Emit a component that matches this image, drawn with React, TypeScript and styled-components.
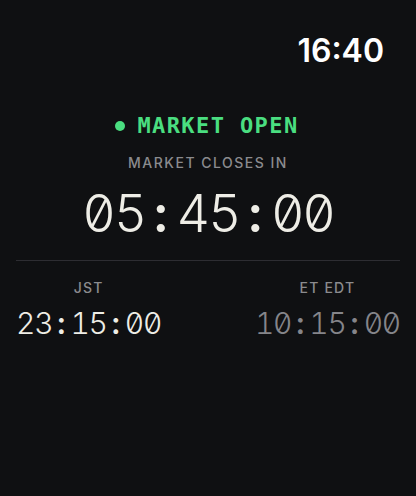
import React from 'react';
import styled, { createGlobalStyle } from 'styled-components';

const MONO_BOLD = `"DejaVu Sans Mono", "Liberation Mono", monospace`;
const SANS = `Inter, "Noto Sans", "Liberation Sans", sans-serif`;

const GlobalStyle = createGlobalStyle`
  html, body {
    margin: 0;
    padding: 0;
    background: #0f1012;
  }
  * {
    box-sizing: border-box;
  }
`;

interface Zone {
  id: string;
  label: string;
  time: string;
  muted?: boolean;
}

const zones: Zone[] = [
  { id: 'jst', label: 'JST', time: '23:15:00' },
  { id: 'et', label: 'ET EDT', time: '10:15:00', muted: true },
];

// light digits with slashed zero, each glyph in a fixed cell so colons line up like a mono face
const MonoDigits = ({ value }: { value: string }) => (
  <>
    {value.split('').map((ch, i) => (
      <SCell key={i} $colon={ch === ':'}>
        {ch}
      </SCell>
    ))}
  </>
);

export default function App() {
  return (
    <>
      <GlobalStyle />
      <SScreen>
        <SStatusBar>
          <SClock>16:40</SClock>
        </SStatusBar>

        <SMain>
          <SStatusLine>
            <SDot />
            <SStatusText>MARKET OPEN</SStatusText>
          </SStatusLine>
          <SCaption>MARKET CLOSES IN</SCaption>
          <SCountdown>
            <MonoDigits value="05:45:00" />
          </SCountdown>
        </SMain>

        <SDivider />

        <SZones>
          {zones.map((z) => (
            <SZone key={z.id}>
              <SZoneLabel>{z.label}</SZoneLabel>
              <SZoneTime $muted={z.muted}>
                <MonoDigits value={z.time} />
              </SZoneTime>
            </SZone>
          ))}
        </SZones>
      </SScreen>
    </>
  );
}

const SScreen = styled.div`
  width: 416px;
  height: 496px;
  background: #0f1012;
  display: flex;
  flex-direction: column;
  overflow: hidden;
`;

const SStatusBar = styled.div`
  display: flex;
  justify-content: flex-end;
  padding: 32px 32px 0;
`;

const SClock = styled.span`
  font-family: ${SANS};
  font-weight: 600;
  font-size: 32px;
  line-height: 38px;
  color: #ffffff;
`;

const SMain = styled.div`
  display: flex;
  flex-direction: column;
  align-items: center;
  margin-top: 42px;
`;

const SStatusLine = styled.div`
  display: flex;
  align-items: center;
  gap: 12px;
  margin-left: -2px;
`;

const SDot = styled.span`
  width: 10px;
  height: 10px;
  border-radius: 50%;
  background: #4ade80;
`;

const SStatusText = styled.span`
  font-family: ${MONO_BOLD};
  font-weight: 700;
  font-size: 22px;
  line-height: 28px;
  letter-spacing: 1.4px;
  color: #4ade80;
`;

const SCaption = styled.div`
  margin-top: 14px;
  font-family: ${SANS};
  font-weight: 500;
  font-size: 14px;
  line-height: 18px;
  letter-spacing: 1.5px;
  color: #8b8b8e;
`;

const SCell = styled.span<{ $colon?: boolean }>`
  display: inline-block;
  width: 0.605em;
  text-align: center;
  font-weight: ${({ $colon }) => ($colon ? 600 : 300)};
`;

const SCountdown = styled.div`
  margin-top: 12px;
  font-family: ${SANS};
  font-size: 52px;
  line-height: 60px;
  font-variant-numeric: tabular-nums slashed-zero;
  font-feature-settings: 'tnum' 1, 'zero' 1;
  color: #eeede6;
  white-space: nowrap;
`;

const SDivider = styled.div`
  margin: 16px 16px 0;
  height: 1px;
  background: #2d2d32;
`;

const SZones = styled.div`
  display: flex;
  justify-content: space-between;
  padding: 0 16px;
  margin-top: 18px;
`;

const SZone = styled.div`
  display: flex;
  flex-direction: column;
  align-items: center;
`;

const SZoneLabel = styled.div`
  font-family: ${SANS};
  font-weight: 500;
  font-size: 14px;
  line-height: 18px;
  letter-spacing: 1.2px;
  color: #8b8b8e;
`;

const SZoneTime = styled.div<{ $muted?: boolean }>`
  margin-top: 8px;
  font-family: ${SANS};
  font-size: 30px;
  line-height: 36px;
  font-variant-numeric: tabular-nums slashed-zero;
  font-feature-settings: 'tnum' 1, 'zero' 1;
  white-space: nowrap;
  color: ${({ $muted }) => ($muted ? '#85858a' : '#eeede6')};
`;
